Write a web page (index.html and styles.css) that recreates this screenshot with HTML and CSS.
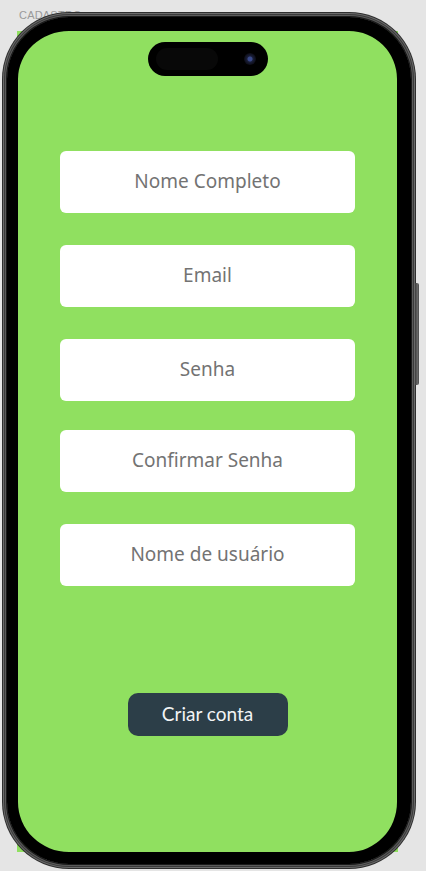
FILE: index.html
```html
<!DOCTYPE html>
<html lang="pt">
<head>
<meta charset="utf-8">
<title>Cadastro</title>
<link rel="stylesheet" href="styles.css">
</head>
<body>
<div class="stage">
  <div class="page-label">CADASTRO</div>
  <main class="screen">
    <form class="form">
      <div class="field">Nome Completo</div>
      <div class="field">Email</div>
      <div class="field">Senha</div>
      <div class="field">Confirmar Senha</div>
      <div class="field">Nome de usuário</div>
    </form>
    <button class="btn" type="button">Criar conta</button>
  </main>
  <div class="frame"></div>
  <div class="island"><span class="island-pill"></span><span class="camera"></span></div>
  <div class="side-btn"></div>
</div>
</body>
</html>
```

FILE: styles.css
```css
html, body {
  margin: 0;
  padding: 0;
  background: #e5e5e5;
}
body {
  width: 426px;
  height: 871px;
  overflow: hidden;
}
.stage {
  position: relative;
  width: 426px;
  height: 871px;
}
.page-label {
  position: absolute;
  left: 19px;
  top: 9px;
  font-family: "Liberation Sans", Arial, sans-serif;
  font-size: 11px;
  color: #9a9a9a;
  letter-spacing: 0.2px;
}
.screen {
  position: absolute;
  left: 17px;
  top: 31px;
  width: 381px;
  height: 821px;
  background: #90e060;
  display: flex;
  flex-direction: column;
  align-items: center;
  padding-top: 120px;
  box-sizing: border-box;
}
.form {
  display: flex;
  flex-direction: column;
  margin: 0;
}
.field {
  width: 295px;
  height: 62px;
  background: #fff;
  border-radius: 6px;
  display: flex;
  align-items: center;
  justify-content: center;
  padding-bottom: 3px;
  box-sizing: border-box;
  font-family: "Noto Sans", sans-serif;
  font-size: 19px;
  font-weight: 400;
  color: #737373;
}
.field + .field {
  margin-top: 32px;
}
.field:nth-child(4) {
  margin-top: 29px;
}
.btn {
  margin-top: 107px;
  width: 160px;
  height: 43px;
  border: none;
  border-radius: 10px;
  background: #2c3e48;
  color: #f2f4f5;
  font-family: "Lato", sans-serif;
  font-size: 19px;
  padding: 0 0 2px;
}
.frame {
  position: absolute;
  left: 7px;
  top: 17px;
  width: 404px;
  height: 847px;
  box-sizing: border-box;
  border-style: solid;
  border-color: #000;
  border-width: 14px 14px 12px 11px;
  border-radius: 62px;
  box-shadow: 0 0 0 1px #1a1a1a, 0 0 0 2px #5a5a5a, 0 0 0 3px #3a3a3a, 0 0 0 4px #6a6a6a, 0 0 0 5px #2e2e2e;
  pointer-events: none;
}
.island {
  position: absolute;
  left: 148px;
  top: 42px;
  width: 120px;
  height: 34px;
  border-radius: 17px;
  background: #000;
}
.island-pill {
  position: absolute;
  left: 8px;
  top: 6px;
  width: 62px;
  height: 22px;
  border-radius: 11px;
  background: #080808;
}
.camera {
  position: absolute;
  left: 96px;
  top: 11px;
  width: 12px;
  height: 12px;
  border-radius: 50%;
  background: radial-gradient(circle, #3a4a8a 0 2px, #1a1f3a 3px, #0c0c14 6px);
}
.side-btn {
  position: absolute;
  left: 415px;
  top: 283px;
  width: 4px;
  height: 102px;
  border-radius: 0 2px 2px 0;
  background: linear-gradient(90deg, #3a3a3a, #6a6a6a 60%, #4a4a4a);
}
```
